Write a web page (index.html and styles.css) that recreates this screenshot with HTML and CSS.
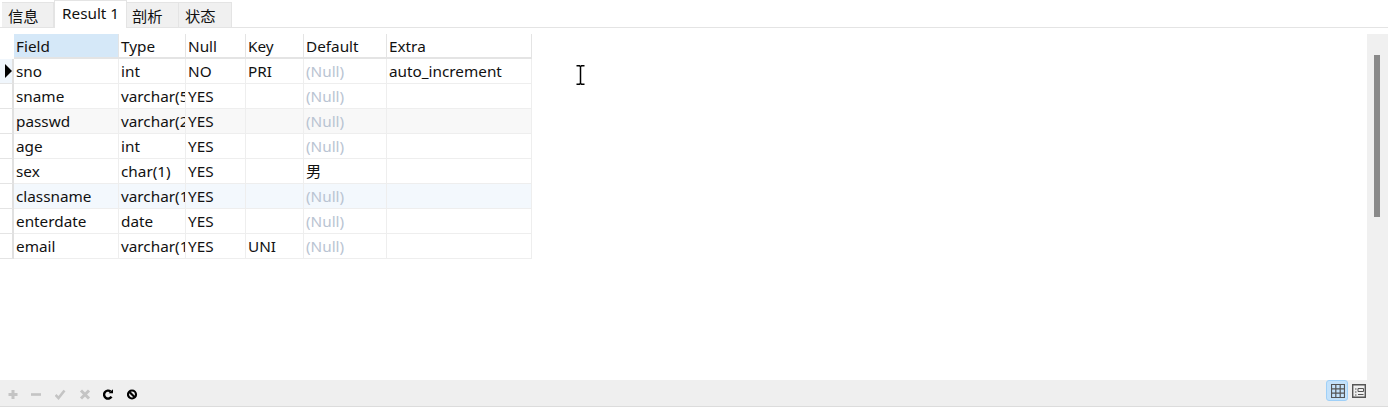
FILE: index.html
```html
<!DOCTYPE html>
<html lang="en">
<head>
  <meta charset="UTF-8">
  <title>Result 1</title>
  <link rel="stylesheet" href="styles.css">
</head>
<body>
  <!-- tabs -->
  <div class="tabs">
    <div class="tab">信息</div>
    <div class="tab active">Result 1</div>
    <div class="tab">剖析</div>
    <div class="tab">状态</div>
  </div>

  <div class="main">
    <div class="grid-area">
      <table class="grid">
        <colgroup>
          <col class="c-gutter"><col class="c-field"><col class="c-type"><col class="c-null"><col class="c-key"><col class="c-default"><col class="c-extra">
        </colgroup>
        <thead>
          <tr>
            <th class="gutter"></th>
            <th class="sel">Field</th><th>Type</th><th>Null</th><th>Key</th><th>Default</th><th>Extra</th>
          </tr>
        </thead>
        <tbody>
          <tr>
            <td class="gutter current"><svg class="arrow" width="7" height="14" viewBox="0 0 7 14"><path d="M0 0L7 7L0 14Z"/></svg></td>
            <td>sno</td><td>int</td><td>NO</td><td>PRI</td><td class="null">(Null)</td><td>auto_increment</td>
          </tr>
          <tr>
            <td class="gutter"></td>
            <td>sname</td><td>varchar(5</td><td>YES</td><td></td><td class="null">(Null)</td><td></td>
          </tr>
          <tr class="alt">
            <td class="gutter"></td>
            <td>passwd</td><td>varchar(2</td><td>YES</td><td></td><td class="null">(Null)</td><td></td>
          </tr>
          <tr>
            <td class="gutter"></td>
            <td>age</td><td>int</td><td>YES</td><td></td><td class="null">(Null)</td><td></td>
          </tr>
          <tr>
            <td class="gutter"></td>
            <td>sex</td><td>char(1)</td><td>YES</td><td></td><td>男</td><td></td>
          </tr>
          <tr class="hover">
            <td class="gutter"></td>
            <td>classname</td><td>varchar(1</td><td>YES</td><td></td><td class="null">(Null)</td><td></td>
          </tr>
          <tr>
            <td class="gutter"></td>
            <td>enterdate</td><td>date</td><td>YES</td><td></td><td class="null">(Null)</td><td></td>
          </tr>
          <tr>
            <td class="gutter"></td>
            <td>email</td><td>varchar(1</td><td>YES</td><td>UNI</td><td class="null">(Null)</td><td></td>
          </tr>
        </tbody>
      </table>
      <svg class="ibeam" width="9" height="20" viewBox="0 0 9 20">
        <path d="M.5 .8H3.5L4.5 1.8L5.5 .8H8.5M4.5 1.8V18.2M.5 19.2H3.5L4.5 18.2L5.5 19.2H8.5" fill="none" stroke="#000" stroke-width="1.5"/>
      </svg>
    </div>
    <div class="scrollbar"><div class="thumb"></div></div>
  </div>

  <!-- bottom toolbar -->
  <div class="toolbar">
    <div class="tools">
      <svg class="tool" width="12" height="12" viewBox="0 0 12 12"><path d="M6 2V11M1.5 6.5H10.5" stroke="#c4c4c4" stroke-width="3" fill="none"/></svg>
      <svg class="tool" width="12" height="12" viewBox="0 0 12 12"><path d="M0 6.5H10" stroke="#c4c4c4" stroke-width="2.6" fill="none"/></svg>
      <svg class="tool" width="12" height="12" viewBox="0 0 12 12"><path d="M.5 7L3.5 10L9.5 2.5" stroke="#c4c4c4" stroke-width="2.6" fill="none"/></svg>
      <svg class="tool" width="12" height="12" viewBox="0 0 12 12"><path d="M2 2.5L10 10.5M10 2.5L2 10.5" stroke="#c4c4c4" stroke-width="3" fill="none"/></svg>
      <svg class="tool" width="12" height="12" viewBox="0 0 12 12"><path d="M8.5 8.7A4 4 0 1 1 7.6 3.5" stroke="#000" stroke-width="2.4" fill="none"/><path d="M5.6 5.3H10V1.3Z" fill="#000"/></svg>
      <svg class="tool" width="12" height="12" viewBox="0 0 12 12"><circle cx="5" cy="6.5" r="4" stroke="#000" stroke-width="2.2" fill="none"/><path d="M2.2 3.7L7.8 9.3" stroke="#000" stroke-width="2.2"/></svg>
    </div>
    <div class="views">
      <div class="view on">
        <svg width="14" height="14" viewBox="0 0 14 14"><path d="M.5 .5H13.5V13.5H.5ZM.5 4.8H13.5M.5 9.2H13.5M4.8 .5V13.5M9.2 .5V13.5" fill="none" stroke="#555" stroke-width="1.2"/></svg>
      </div>
      <div class="view">
        <svg width="14" height="14" viewBox="0 0 14 14"><path d="M.7 .7H13.3V13.3H.7Z" fill="none" stroke="#555" stroke-width="1.4"/><path d="M3 5H4.5M3 8H4.5M3 11H4.5M6 4.5H11.5V7.5H6ZM6 10.5H11.5" fill="none" stroke="#555"/></svg>
      </div>
    </div>
  </div>
</body>
</html>
```

FILE: styles.css
```css
html, body {
  margin: 0;
  padding: 0;
}
body {
  width: 1388px;
  height: 408px;
  overflow: hidden;
  background: #fff;
  font-family: "Noto Sans", "Noto Sans CJK SC", sans-serif;
  font-size: 15.3px;
  color: #111;
}

/* tabs */
.tabs {
  display: flex;
  height: 27px;
  padding-left: 2px;
  border-bottom: 1px solid #e4e4e4;
}
.tab {
  box-sizing: border-box;
  width: 52px;
  height: 25px;
  margin-top: 2px;
  padding: 2px 0 0 5px;
  line-height: 22px;
  background: #f0f0f0;
  border: 1px solid #e4e4e4;
  border-bottom: 0;
  border-left: 0;
}
.tab:first-child {
  padding-left: 6px;
}
.tab:last-child {
  width: 53px;
  padding-left: 6px;
}
.tab.active {
  width: 73px;
  height: 28px;
  margin-top: 0;
  padding: 1px 0 0 7px;
  background: #fff;
  border-left: 1px solid #e4e4e4;
  white-space: nowrap;
}

.main {
  display: flex;
  height: 352px;
}
.grid-area {
  position: relative;
  flex: 1;
  padding-top: 6px;
}

/* table */
.grid {
  table-layout: fixed;
  width: 532px;
  border-collapse: separate;
  border-spacing: 0;
}
.c-gutter { width: 14px; }
.c-field { width: 105px; }
.c-type { width: 67px; }
.c-null { width: 60px; }
.c-key { width: 58px; }
.c-default { width: 83px; }
.c-extra { width: 145px; }
.grid th, .grid td {
  box-sizing: border-box;
  height: 25px;
  padding: 0 0 0 2px;
  overflow: hidden;
  white-space: nowrap;
  font-weight: normal;
  text-align: left;
  line-height: 23px;
  border-right: 1px solid #eeeeee;
  border-bottom: 1px solid #eeeeee;
}
.grid th {
  padding-top: 1px;
  line-height: 22px;
  border-right-color: #e4e4e4;
  border-bottom: 2px solid #e4e4e4;
}
.grid th.sel {
  background: #d5e8f8;
}
.grid .gutter {
  padding: 0;
  border-right: 2px solid #e0e0e0;
  border-bottom-color: #e4e4e4;
}
.grid th.gutter {
  border-right: 0;
  border-bottom: 0;
}
.grid td.current {
  background: #f0f6fc;
}
.arrow {
  display: block;
  margin: 0 0 0 5px;
}
.alt td {
  background: #f8f8f8;
}
.hover td {
  background: #f3f8fd;
}
.alt .gutter, .hover .gutter {
  background: #fff;
}
.grid td.null {
  color: #b9c4d2;
}
.ibeam {
  position: absolute;
  left: 576px;
  top: 37px;
}

/* scrollbar */
.scrollbar {
  width: 21px;
  margin-top: 6px;
  background: #f0f0f0;
}
.thumb {
  width: 6px;
  height: 162px;
  margin: 21px 0 0 7px;
  background: #8a8a8a;
}

/* toolbar */
.toolbar {
  display: flex;
  justify-content: space-between;
  align-items: flex-start;
  box-sizing: border-box;
  height: 27px;
  background: #efefef;
  border-bottom: 1px solid #dcdcdc;
}
.tools {
  display: flex;
  gap: 12px;
  padding: 8px 0 0 7px;
}
.tool {
  display: block;
}
.views {
  display: flex;
  padding-right: 20px;
}
.view {
  box-sizing: border-box;
  width: 20px;
  height: 21px;
  padding: 3px;
  border: 1px solid transparent;
}
.view.on {
  width: 22px;
  padding: 3px 4px;
  background: #c4e2fb;
  border-color: #9fd0f8;
  border-radius: 3px;
}
.view svg {
  display: block;
}
```
